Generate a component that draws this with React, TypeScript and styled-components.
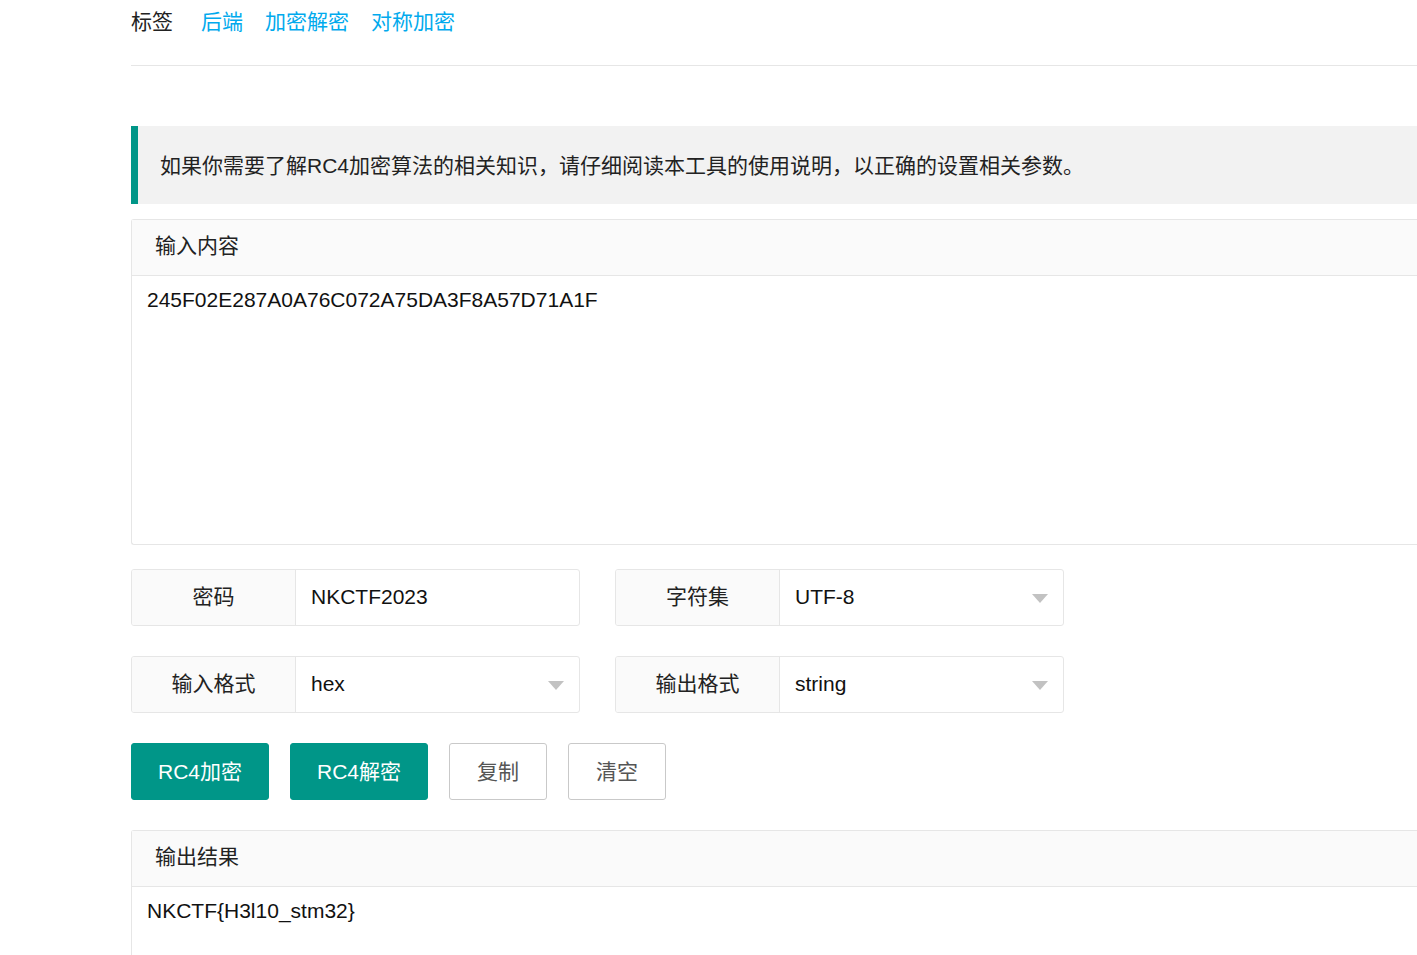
import styled, { createGlobalStyle } from 'styled-components';

const GlobalStyle = createGlobalStyle`
  html, body {
    margin: 0;
    padding: 0;
    background: #fff;
    overflow: hidden;
  }
  body {
    font-family: "Liberation Sans", "Noto Sans CJK SC", sans-serif;
    font-size: 21px;
    color: #333;
  }
`;

const crumbs = [
  { label: '标签', link: false },
  { label: '后端', link: true },
  { label: '加密解密', link: true },
  { label: '对称加密', link: true },
];

export default function App() {
  return (
    <>
      <GlobalStyle />
      <Page>
        <Breadcrumb>
          {crumbs.map(({ label, link }, index) => (
            <Crumb
              key={label}
              $link={link}
              $first={index === 0}
            >
              {label}
            </Crumb>
          ))}
        </Breadcrumb>
        <Rule />

        <Quote>
          如果你需要了解RC4加密算法的相关知识，请仔细阅读本工具的使用说明，以正确的设置相关参数。
        </Quote>

        <Card>
          <CardHeader>输入内容</CardHeader>
          <CardBody $height={268}>245F02E287A0A76C072A75DA3F8A57D71A1F</CardBody>
        </Card>

        <FormGrid>
          <Field>
            <FieldLabel>密码</FieldLabel>
            <FieldInput>NKCTF2023</FieldInput>
          </Field>
          <Field>
            <FieldLabel>字符集</FieldLabel>
            <FieldInput>
              UTF-8
              <Caret />
            </FieldInput>
          </Field>
          <Field>
            <FieldLabel>输入格式</FieldLabel>
            <FieldInput>
              hex
              <Caret />
            </FieldInput>
          </Field>
          <Field>
            <FieldLabel>输出格式</FieldLabel>
            <FieldInput>
              string
              <Caret />
            </FieldInput>
          </Field>
        </FormGrid>

        <Buttons>
          <Button $primary>RC4加密</Button>
          <Button $primary>RC4解密</Button>
          <Button>复制</Button>
          <Button>清空</Button>
        </Buttons>

        <Card>
          <CardHeader>输出结果</CardHeader>
          <CardBody $height={200}>NKCTF{'{'}H3l10_stm32{'}'}</CardBody>
        </Card>
      </Page>
    </>
  );
}

const Page = styled.div`
  margin-left: 131px;
  width: 1400px;
`;

const Breadcrumb = styled.div`
  display: flex;
  align-items: center;
  height: 44px;
  margin-bottom: 21px;
`;

const Crumb = styled.span<{ $link: boolean; $first: boolean }>`
  color: ${(p) => (p.$link ? '#01AAED' : '#222')};
  margin-right: ${(p) => (p.$first ? '28px' : '22px')};
  line-height: 44px;
`;

const Rule = styled.div`
  height: 1px;
  background: #e6e6e6;
  margin-bottom: 60px;
`;

const Quote = styled.div`
  background: #f2f2f2;
  border-left: 7px solid #009688;
  padding: 23px 22px 21px 22px;
  line-height: 34px;
  color: #222;
  margin-bottom: 15px;
`;

const Card = styled.div`
  border: 1px solid #e6e6e6;
  border-right: none;
  border-radius: 3px 0 0 3px;
`;

const CardHeader = styled.div`
  height: 52px;
  line-height: 52px;
  padding: 0 0 3px 23px;
  background: #fafafa;
  border-bottom: 1px solid #e6e6e6;
  color: #222;
`;

const CardBody = styled.div<{ $height: number }>`
  height: ${(p) => p.$height}px;
  padding: 10px 15px;
  box-sizing: border-box;
  line-height: 28px;
  color: #111;
`;

const FormGrid = styled.div`
  display: grid;
  grid-template-columns: 449px 449px;
  column-gap: 35px;
  row-gap: 30px;
  margin-top: 24px;
`;

const Field = styled.div`
  display: flex;
  height: 57px;
  border: 1px solid #e6e6e6;
  border-radius: 3px;
  box-sizing: border-box;
  overflow: hidden;
`;

const FieldLabel = styled.div`
  width: 163px;
  flex-shrink: 0;
  background: #fafafa;
  border-right: 1px solid #e6e6e6;
  display: flex;
  align-items: center;
  justify-content: center;
  padding-bottom: 6px;
  color: #222;
`;

const FieldInput = styled.div`
  flex: 1;
  display: flex;
  align-items: center;
  padding: 0 15px 1px;
  color: #111;
`;

const Caret = styled.span`
  margin-left: auto;
  margin-top: 3px;
  width: 0;
  height: 0;
  border-left: 8.5px solid transparent;
  border-right: 8.5px solid transparent;
  border-top: 9px solid #c2c2c2;
`;

const Buttons = styled.div`
  display: flex;
  gap: 21px;
  margin: 30px 0;
`;

const Button = styled.button<{ $primary?: boolean }>`
  height: 57px;
  padding: 0 ${(p) => (p.$primary ? '26px' : '27px')} 4px;
  border-radius: 3px;
  font: inherit;
  font-size: 21px;
  cursor: pointer;
  border: 1px solid ${(p) => (p.$primary ? '#009688' : '#c9c9c9')};
  background: ${(p) => (p.$primary ? '#009688' : '#fff')};
  color: ${(p) => (p.$primary ? '#fff' : '#555')};
`;
